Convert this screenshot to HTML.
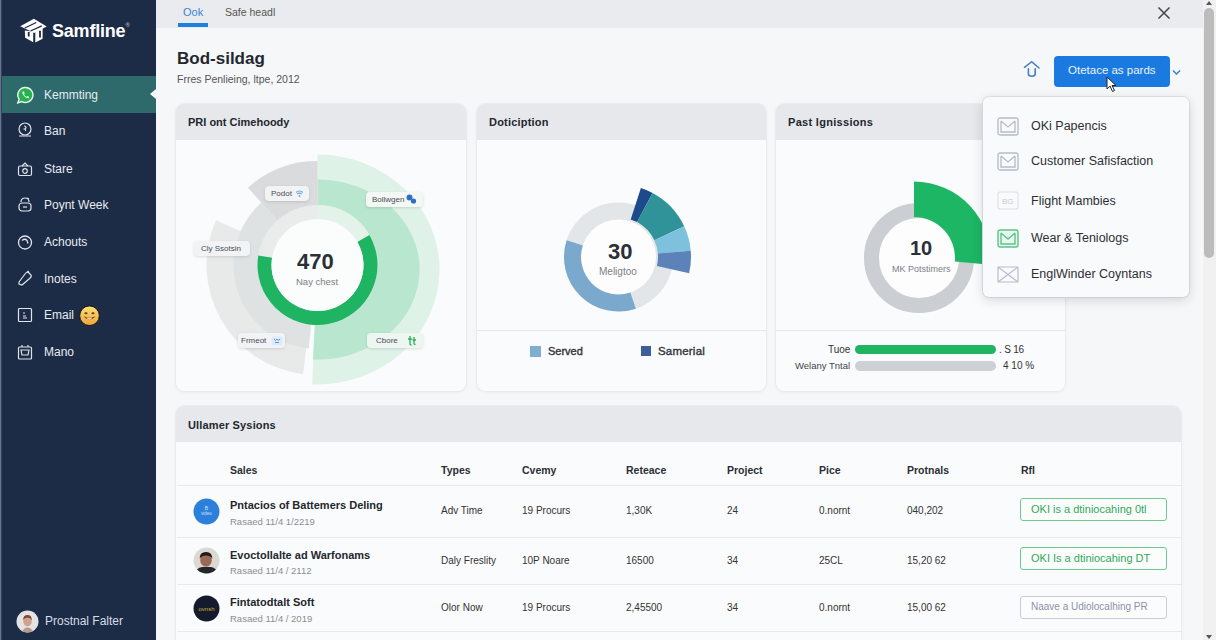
<!DOCTYPE html>
<html><head><meta charset="utf-8">
<style>
*{margin:0;padding:0;box-sizing:border-box}
html,body{width:1216px;height:640px;overflow:hidden}
body{font-family:"Liberation Sans",sans-serif;background:#f6f7f9;position:relative;color:#222}
.abs{position:absolute}
.sb{left:0;top:0;width:156px;height:640px;background:#1c2b46}
.sbedge{left:0;top:0;width:1px;height:640px;background:#66748a;box-shadow:1px 0 0 #34435b}
.nav{position:absolute;left:44px;font-size:12px;color:#e8ecf1;line-height:14px;white-space:nowrap}
.ic{position:absolute;left:17px;width:16px;height:16px}
.tabbar{left:156px;top:0;width:1060px;height:28px;background:#e9ebee}
.card{position:absolute;background:#fafbfc;border-radius:8px;box-shadow:0 0 0 0.5px #e3e5e8,0 1px 4px rgba(0,0,0,0.06);overflow:hidden}
.chd{position:absolute;left:0;top:0;right:0;height:36px;background:#e6e8eb}
.chd span{position:absolute;left:12px;top:11px;font-size:11px;font-weight:bold;color:#23272e;line-height:14px;white-space:nowrap}
.t{position:absolute;white-space:nowrap;line-height:1}
.chip{position:absolute;height:15px;background:#f2f3f5;border-radius:4px;box-shadow:0 1px 3px rgba(0,0,0,0.12);font-size:8px;color:#4a4d52;line-height:15px;padding-left:6px;white-space:nowrap}
.th{position:absolute;top:464px;font-size:10.5px;font-weight:bold;color:#2a2e35;line-height:12px;white-space:nowrap}
.td{position:absolute;font-size:10px;color:#333;line-height:12px;white-space:nowrap}
.hl{position:absolute;left:177px;width:1004px;height:1px;background:#e7e9ec}
.btn{position:absolute;left:1020px;width:147px;height:23px;border:1.5px solid #6ccb8c;border-radius:3px;font-size:11px;color:#32a858;line-height:20px;padding-left:10px;white-space:nowrap;background:#fbfdfc}
.dd{position:absolute;font-size:12.5px;color:#2c2f35;line-height:14px;white-space:nowrap;left:1031px}
.ddi{position:absolute;left:997px;width:22px;height:19px}
</style></head><body>

<!-- sidebar -->
<div class="abs sb"></div>
<div class="abs sbedge"></div>
<!-- logo -->
<svg class="abs" style="left:0;top:0" width="60" height="50" viewBox="0 0 60 50">
  <path d="M20.2,26.2 L33.9,18.8 L46.7,26.5 L34.2,33 Z" fill="#fff"/>
  <path d="M24.8,28 L36.3,22.5 M30.5,31 L41.8,25.8" stroke="#1b2a45" stroke-width="1.3"/>
  <path d="M24.8,30.5 L33.2,31.8 L33.2,42.3 L25.2,37.8 Z" fill="#fff"/>
  <path d="M35.3,31.5 L42.6,28 L42.6,38.8 L35.3,42.6 Z" fill="#fff"/>
  <path d="M28.7,32 V36.6 M40,30.8 V37.6" stroke="#1b2a45" stroke-width="1.8"/>
</svg>
<div class="t" style="left:52px;top:22px;font-size:18px;font-weight:bold;color:#fff;letter-spacing:-0.2px">Samfline<span style="font-size:6px;vertical-align:top;color:#aab">&#174;</span></div>

<!-- active item -->
<div class="abs" style="left:2px;top:76px;width:154px;height:37px;background:#2e6a6c"></div>
<div class="abs" style="left:150px;top:89px;width:0;height:0;border-top:5px solid transparent;border-bottom:5px solid transparent;border-right:6px solid #f6f7f9"></div>
<svg class="ic" style="top:86px;left:16px;width:19px;height:19px" viewBox="0 0 19 19">
  <path d="M9.5,1.5 a7.5,7.5 0 1 1 -3.6,14.1 L1.8,17 L3.1,13.2 A7.5,7.5 0 0 1 9.5,1.5 Z" fill="#25b24f" stroke="#eaf7ee" stroke-width="1.4"/>
  <path d="M6.5,5.5 c-0.8,2.5 2.5,6.5 6,6.8 l0.8,-1.4 -1.8,-0.9 -0.8,0.8 c-1.2,-0.5 -2.2,-1.6 -2.7,-2.8 l0.8,-0.8 -0.9,-1.8 Z" fill="#eaf7ee"/>
</svg>
<div class="nav" style="top:88px">Kemmting</div>

<svg class="ic" style="top:122px" viewBox="0 0 16 16" fill="none" stroke="#dfe4ea" stroke-width="1.2"><circle cx="8" cy="7" r="6"/><path d="M7,4 q2,0 2,1.5 q0,1 -1.5,1.5 q1.5,0.5 1,2 M2,14 h12"/></svg>
<div class="nav" style="top:124px">Ban</div>
<svg class="ic" style="top:161px" viewBox="0 0 16 16" fill="none" stroke="#dfe4ea" stroke-width="1.2"><rect x="1.5" y="5" width="13" height="9.5" rx="1.5"/><path d="M5,5 L8,2 L11,5"/><circle cx="8" cy="10" r="2.3"/></svg>
<div class="nav" style="top:162px">Stare</div>
<svg class="ic" style="top:196px" viewBox="0 0 16 16" fill="none" stroke="#dfe4ea" stroke-width="1.2"><path d="M4,6 q0,-4 4,-4 q4,0 4,4"/><rect x="2" y="7" width="12" height="8" rx="3"/><path d="M6,11 h4"/><path d="M10,2 l2,1"/></svg>
<div class="nav" style="top:198px">Poynt Week</div>
<svg class="ic" style="top:234px" viewBox="0 0 16 16" fill="none" stroke="#dfe4ea" stroke-width="1.3"><circle cx="8" cy="8.5" r="6.5"/><path d="M5,6.5 q3,-2.5 5,0 l1,3"/></svg>
<div class="nav" style="top:235px">Achouts</div>
<svg class="ic" style="top:270px" viewBox="0 0 16 16" fill="none" stroke="#dfe4ea" stroke-width="1.2"><path d="M2,12 L8,4 q2,-3 4,-1 l2,2 q1,2 -2,4 L5,15 L2,14 Z"/><path d="M10,2 l2,-1"/></svg>
<div class="nav" style="top:272px">Inotes</div>
<svg class="ic" style="top:307px" viewBox="0 0 16 16" fill="none" stroke="#dfe4ea" stroke-width="1.2"><rect x="1.5" y="1.5" width="13" height="13" rx="1"/><path d="M6,6 h2 M6,9 h3 M6,11 h4" stroke-width="1"/></svg>
<div class="nav" style="top:308px">Email</div>
<svg class="abs" style="left:79px;top:304.5px" width="21" height="21" viewBox="0 0 21 21"><defs><linearGradient id="emg" x1="0" y1="0" x2="0" y2="1"><stop offset="0" stop-color="#fbe27a"/><stop offset="1" stop-color="#eea43c"/></linearGradient></defs>
  <circle cx="10.5" cy="10.75" r="9.8" fill="url(#emg)" stroke="#140f0a" stroke-width="0.9"/>
  <ellipse cx="7" cy="8.3" rx="1.6" ry="1" fill="#6a3a10"/><ellipse cx="14" cy="8.3" rx="1.6" ry="1" fill="#6a3a10"/>
  <path d="M4.5,11.6 q6,6.5 12,0 q-6,1.5 -12,0 Z" fill="#8a4a12"/>
  <path d="M7.3,12.4 h6.2 q-1,2.4 -3.1,2.4 q-2.1,0 -3.1,-2.4 Z" fill="#ffd79a"/>
</svg>
<svg class="ic" style="top:344px" viewBox="0 0 16 16" fill="none" stroke="#dfe4ea" stroke-width="1.2"><rect x="1.5" y="3" width="13" height="12" rx="1"/><path d="M4,6 h8 l-1,5 h-6 Z M5,3 v-2 M11,3 v-2"/></svg>
<div class="nav" style="top:345px">Mano</div>

<!-- user -->
<svg class="abs" style="left:16px;top:610px" width="23" height="23" viewBox="0 0 23 23"><defs><clipPath id="cpu"><circle cx="11.5" cy="11.5" r="11"/></clipPath></defs><circle cx="11.5" cy="11.5" r="11" fill="#e4e2e3"/><g clip-path="url(#cpu)"><path d="M6,23 q0.5,-5 5.5,-5.5 q5,0.5 5.5,5.5 Z" fill="#b89a8c"/><ellipse cx="11.5" cy="11" rx="4.3" ry="5.2" fill="#d0a48c"/><path d="M7.2,10 q0,-5 4.3,-5 q4.3,0 4.3,5 q-1.5,-2.5 -4.3,-2.5 q-2.8,0 -4.3,2.5 Z" fill="#7a4a36"/></g></svg>
<div class="nav" style="left:45px;top:614px;font-size:12px;color:#d8dee6">Prostnal Falter</div>

<!-- tab bar -->
<div class="abs tabbar"></div>
<div class="t" style="left:183px;top:7px;font-size:11px;color:#3a86d6">Ook</div>
<div class="abs" style="left:178px;top:23px;width:30px;height:4px;background:#1e7fdc"></div>
<div class="t" style="left:225px;top:7px;font-size:10.5px;color:#555">Safe headl</div>
<svg class="abs" style="left:1157px;top:6px" width="14" height="14" viewBox="0 0 14 14"><path d="M1.5,1.5 L12.5,12.5 M12.5,1.5 L1.5,12.5" stroke="#444" stroke-width="1.5"/></svg>

<!-- scrollbar -->
<div class="abs" style="left:1203px;top:0;width:13px;height:640px;background:#f1f1f1"></div>
<div class="abs" style="left:1204px;top:8px;width:10px;height:250px;background:#bcbcbc;border-radius:5px"></div>
<div class="abs" style="left:1206px;top:1px;width:0;height:0;border-left:3.5px solid transparent;border-right:3.5px solid transparent;border-bottom:4px solid #555"></div>
<div class="abs" style="left:1206px;top:635px;width:0;height:0;border-left:3.5px solid transparent;border-right:3.5px solid transparent;border-top:4px solid #555"></div>

<!-- title -->
<div class="t" style="left:177px;top:50px;font-size:17px;font-weight:bold;color:#23272e">Bod-sildag</div>
<div class="t" style="left:177px;top:74px;font-size:10.5px;color:#555">Frres Penlieing, ltpe, 2012</div>

<!-- share icon & button -->
<svg class="abs" style="left:1022px;top:59px" width="20" height="20" viewBox="0 0 20 20" fill="none" stroke="#4a80bd" stroke-width="1.6" stroke-linecap="round"><path d="M2.5,8.3 L9.7,2.7 L17,9"/><path d="M6.4,9.8 V14.8 q0,2.4 3.4,2.4 q3.4,0 3.4,-2.4 V9.8"/></svg>
<div class="abs" style="left:1054px;top:56px;width:116px;height:31px;background:#1a7ae0;border-radius:4px"></div>
<div class="t" style="left:1068px;top:65px;font-size:11.5px;color:#eaf3fd">Otetace as pards</div>
<svg class="abs" style="left:1172px;top:69px" width="9" height="7" viewBox="0 0 9 7"><path d="M1,1.5 L4.5,5 L8,1.5" stroke="#2e7fd1" stroke-width="1.4" fill="none"/></svg>

<!-- cards -->
<div class="card" style="left:176px;top:103.5px;width:290px;height:287.5px"><div class="chd"><span>PRI ont Cimehoody</span></div></div>
<div class="card" style="left:477px;top:103.5px;width:289px;height:287.5px"><div class="chd"><span style="letter-spacing:0.2px">Doticiption</span></div>
  <div class="abs" style="left:0;top:226px;width:289px;height:1px;background:#e5e7ea"></div></div>
<div class="card" style="left:776px;top:103.5px;width:289px;height:287.5px"><div class="chd"><span style="letter-spacing:0.3px">Past lgnissions</span></div>
  <div class="abs" style="left:0;top:226px;width:289px;height:1px;background:#e5e7ea"></div></div>

<svg class="abs" style="left:0;top:0" width="1216" height="640" viewBox="0 0 1216 640">
<path d="M317.50,154.50 A122,115 0 1 1 312.18,384.39 L317.50,269.50 Z" fill="#dff2e8"/><path d="M317.50,179.50 A102,90 0 1 1 313.05,359.41 L317.50,269.50 Z" fill="#b8e6cf"/><path d="M303.09,374.18 A110,110 0 0 1 216.01,220.26 L316.50,265.00 Z" fill="#e8eaea"/><path d="M308.72,348.54 A84,84 0 0 1 261.29,202.58 L317.50,265.00 Z" fill="#dfe2e2"/><path d="M247.91,187.71 A104,104 0 0 1 317.50,161.00 L317.50,265.00 Z" fill="#dadbdd"/><circle cx="317.5" cy="265" r="60" fill="#e9eceb"/><path d="M317.50,205.00 A60,60 0 0 1 369.46,235.00 L317.50,265.00 Z" fill="#e3f3ea"/><path d="M369.46,235.00 A60,60 0 1 1 258.24,255.61 L272.07,257.80 A46,46 0 1 0 357.34,242.00 Z" fill="#1fb462"/><circle cx="317.5" cy="265" r="46" fill="#fbfcfc"/>
<circle cx="618.5" cy="257" r="38" fill="#fdfdfe"/><circle cx="618.5" cy="257" r="46" fill="none" stroke="#e3e6e8" stroke-width="17"/><path d="M635.79,308.68 A54.5,54.5 0 0 1 566.67,240.16 L582.84,245.41 A37.5,37.5 0 0 0 630.40,292.56 Z" fill="#7ba8cd"/><path d="M640.90,188.05 A72.5,72.5 0 0 1 652.54,192.99 L637.04,222.12 A39.5,39.5 0 0 0 630.71,219.43 Z" fill="#1c4a8b"/><path d="M652.54,192.99 A72.5,72.5 0 0 1 684.21,226.36 L654.30,240.31 A39.5,39.5 0 0 0 637.04,222.12 Z" fill="#2f9399"/><path d="M684.21,226.36 A72.5,72.5 0 0 1 690.72,250.68 L657.85,253.56 A39.5,39.5 0 0 0 654.30,240.31 Z" fill="#7ec1dc"/><path d="M690.72,250.68 A72.5,72.5 0 0 1 689.14,273.31 L656.99,265.89 A39.5,39.5 0 0 0 657.85,253.56 Z" fill="#5d82b9"/>
<circle cx="919" cy="258" r="40.5" fill="#fdfdfe"/><circle cx="919" cy="258" r="47.5" fill="none" stroke="#cbced2" stroke-width="15"/><path d="M914.00,181.50 A76.5,76.5 0 0 1 990.21,264.67 L954.84,261.57 A41,41 0 0 0 914.00,217.00 Z" fill="#1db664"/>
</svg>

<!-- chart1 texts -->
<div class="t" style="left:297px;top:250.5px;font-size:22px;font-weight:bold;color:#2a2f38">470</div>
<div class="t" style="left:296px;top:277px;font-size:9.5px;color:#7a7f86">Nay chest</div>
<div class="chip" style="left:265px;top:186px;width:44px">Podot<svg style="position:absolute;left:30px;top:3px" width="9" height="9" viewBox="0 0 9 9" fill="none" stroke="#6aa6e6" stroke-width="1.1"><path d="M1,3.5 q3.5,-3 7,0 M2.3,5 q2.2,-1.8 4.4,0"/><circle cx="4.5" cy="7" r="0.9" fill="#6aa6e6" stroke="none"/></svg></div>
<div class="chip" style="left:366px;top:192px;width:57px;background:#f3f8f5">Bollwgen<svg style="position:absolute;left:40px;top:2px" width="11" height="11" viewBox="0 0 11 11"><circle cx="3.5" cy="3.5" r="3" fill="#2e6fc4"/><circle cx="7.5" cy="7" r="2.6" fill="#2e6fc4"/></svg></div>
<div class="chip" style="left:194px;top:241px;width:56px;padding-left:7px">Cly Ssotsin</div>
<div class="chip" style="left:238px;top:333px;width:47px;padding-left:3px">Frmeot<svg style="position:absolute;left:33px;top:2.5px" width="12" height="10" viewBox="0 0 12 10"><rect x="0.5" y="0.5" width="11" height="9" rx="2.5" fill="#dcebfb"/><path d="M3,3 q1.5,3 3,0 q1.5,3 3,0 M4,6.5 h4" stroke="#5b8fd6" stroke-width="1" fill="none"/></svg></div>
<div class="chip" style="left:367px;top:333px;width:56px;padding-left:9px;background:#eef6f1">Cbore<svg style="position:absolute;left:40px;top:2px" width="10" height="11" viewBox="0 0 10 11" fill="none" stroke="#2fae5c" stroke-width="1.3"><path d="M3,1 V9 q0,1 1.5,1 M1,4 h4 M7,2 V8.5 q0,1 1.5,1 M5.5,5 h3.5"/></svg></div>

<!-- chart2 texts -->
<div class="t" style="left:608px;top:241px;font-size:22px;font-weight:bold;color:#2a2f38">30</div>
<div class="t" style="left:599px;top:267px;font-size:10px;color:#7a7f86">Meligtoo</div>
<div class="abs" style="left:530px;top:346px;width:11px;height:11px;background:#7eaed0"></div>
<div class="t" style="left:548px;top:346px;font-size:11px;color:#33373d;-webkit-text-stroke:0.4px #33373d">Served</div>
<div class="abs" style="left:641px;top:346px;width:10px;height:10px;background:#3d5f99"></div>
<div class="t" style="left:658px;top:346px;font-size:11.5px;color:#33373d;-webkit-text-stroke:0.4px #33373d;letter-spacing:0.2px">Samerial</div>

<!-- chart3 texts -->
<div class="t" style="left:910px;top:238px;font-size:20px;font-weight:bold;color:#2a2f38">10</div>
<div class="t" style="left:892px;top:265px;font-size:9px;color:#7a7f86">MK Potstimers</div>
<div class="t" style="left:828px;top:345px;font-size:10px;color:#333">Tuoe</div>
<div class="abs" style="left:855px;top:345px;width:141px;height:9px;background:#20b462;border-radius:5px"></div>
<div class="t" style="left:999px;top:345px;font-size:10px;color:#333;letter-spacing:-0.2px">. S 16</div>
<div class="t" style="left:795px;top:361px;font-size:9.5px;color:#444">Welany Tntal</div>
<div class="abs" style="left:855px;top:361px;width:141px;height:10px;background:#cdd0d4;border-radius:5px"></div>
<div class="t" style="left:1003px;top:361px;font-size:10px;color:#333">4 10 %</div>

<!-- dropdown -->
<div class="abs" style="left:983px;top:97px;width:206px;height:200px;background:#f9fafb;border-radius:6px;box-shadow:0 3px 12px rgba(0,0,0,0.15),0 0 0 1px #e4e6e9"></div>
<svg class="ddi" style="top:117px" viewBox="0 0 22 19" fill="none" stroke="#b4bbcc" stroke-width="1.3"><rect x="1" y="1" width="20" height="17" rx="2"/><path d="M4,4 L11,10 L18,4 M4,4 V15 H18 V4"/></svg>
<div class="dd" style="top:119px">OKi Papencis</div>
<svg class="ddi" style="top:152px" viewBox="0 0 22 19" fill="none" stroke="#b4bbcc" stroke-width="1.3"><rect x="1" y="1" width="20" height="17" rx="2"/><path d="M4,4 L11,10 L18,4 M4,4 V15 H18 V4"/></svg>
<div class="dd" style="top:154px">Customer Safisfaction</div>
<svg class="ddi" style="top:191px" viewBox="0 0 22 19" fill="none" stroke="#dcdfe3" stroke-width="1.1"><rect x="1" y="1" width="20" height="17" rx="2"/><text x="5" y="13" font-size="8" fill="#c8ccd1" stroke="none" font-family="Liberation Sans">BG</text></svg>
<div class="dd" style="top:194px">Flight Mambies</div>
<svg class="ddi" style="top:229px" viewBox="0 0 22 19" fill="none" stroke="#5cc48a" stroke-width="1.4"><rect x="1" y="1" width="20" height="17" rx="2" fill="#e9f6ef"/><path d="M4,4 L11,10 L18,4 M4,4 V15 H18 V4"/></svg>
<div class="dd" style="top:231px">Wear &amp; Teniologs</div>
<svg class="ddi" style="top:265px" viewBox="0 0 22 19" fill="none" stroke="#b8bcd0" stroke-width="1.2"><rect x="1" y="2" width="20" height="15" rx="1"/><path d="M1,2 L21,17 M21,2 L1,17"/></svg>
<div class="dd" style="top:267px">EnglWinder Coyntans</div>

<!-- cursor -->
<svg class="abs" style="left:1106px;top:76px" width="14" height="18" viewBox="0 0 14 18"><path d="M1,1 L1,13 L4,10 L6.5,15.5 L8.5,14.5 L6,9.5 L10,9.5 Z" fill="#fff" stroke="#222" stroke-width="1"/></svg>

<!-- table -->
<div class="card" style="left:176px;top:406px;width:1005px;height:260px"><div class="chd"><span style="left:12px;top:12px;letter-spacing:0.15px">Ullamer Sysions</span></div></div>
<div class="th" style="left:230px">Sales</div>
<div class="th" style="left:441px">Types</div>
<div class="th" style="left:522px">Cvemy</div>
<div class="th" style="left:626px">Reteace</div>
<div class="th" style="left:727px">Project</div>
<div class="th" style="left:819px">Pice</div>
<div class="th" style="left:907px">Protnals</div>
<div class="th" style="left:1021px">Rfl</div>
<div class="hl" style="top:485px"></div>
<div class="hl" style="top:537px"></div>
<div class="hl" style="top:584px"></div>
<div class="hl" style="top:631px"></div>

<!-- row1 -->
<svg class="abs" style="left:193px;top:498px" width="27" height="27" viewBox="0 0 27 27"><circle cx="13.5" cy="13.5" r="13" fill="#2d7fdc"/><text x="13.5" y="12" font-size="5" fill="#cfe3fa" text-anchor="middle" font-family="Liberation Sans">B</text><text x="13.5" y="17" font-size="4.5" fill="#cfe3fa" text-anchor="middle" font-family="Liberation Sans">video</text></svg>
<div class="td" style="left:230px;top:499px;font-size:11px;font-weight:bold;color:#23272e">Pntacios of Battemers Deling</div>
<div class="td" style="left:230px;top:516px;font-size:9.5px;color:#8a8e94">Rasaed 11/4 1/2219</div>
<div class="td" style="left:441px;top:505px">Adv Time</div>
<div class="td" style="left:522px;top:505px">19 Procurs</div>
<div class="td" style="left:626px;top:505px">1,30K</div>
<div class="td" style="left:727px;top:505px">24</div>
<div class="td" style="left:819px;top:505px">0.nornt</div>
<div class="td" style="left:907px;top:505px">040,202</div>
<div class="btn" style="top:498px">OKI is a dtiniocahing 0tl</div>

<!-- row2 -->
<svg class="abs" style="left:193px;top:547px" width="27" height="27" viewBox="0 0 27 27"><defs><clipPath id="cp2"><circle cx="13.5" cy="13.5" r="13"/></clipPath></defs><circle cx="13.5" cy="13.5" r="13" fill="#dcd8d4"/><g clip-path="url(#cp2)"><path d="M1,28 q2,-7 8,-8 l9,0 q6,1 8,8 Z" fill="#262626"/><ellipse cx="13" cy="13" rx="5.8" ry="6.8" fill="#9a6a55"/><path d="M6.8,12 q-0.5,-7 6.2,-7 q6.5,0 6.2,7 q-1,-3.5 -6.2,-3.5 q-5.2,0 -6.2,3.5 Z" fill="#1e1a18"/></g></svg>
<div class="td" style="left:230px;top:549px;font-size:11px;font-weight:bold;color:#23272e">Evoctollalte ad Warfonams</div>
<div class="td" style="left:230px;top:565px;font-size:9.5px;color:#8a8e94">Rasaed 11/4 / 2112</div>
<div class="td" style="left:441px;top:554.5px">Daly Freslity</div>
<div class="td" style="left:522px;top:554.5px">10P Noare</div>
<div class="td" style="left:626px;top:554.5px">16500</div>
<div class="td" style="left:727px;top:554.5px">34</div>
<div class="td" style="left:819px;top:554.5px">25CL</div>
<div class="td" style="left:907px;top:554.5px">15,20 62</div>
<div class="btn" style="top:547px">OKI Is a dtiniocahing DT</div>

<!-- row3 -->
<svg class="abs" style="left:193px;top:595px" width="27" height="27" viewBox="0 0 27 27"><circle cx="13.5" cy="13.5" r="13" fill="#151a2c"/><text x="13.5" y="15.5" font-size="6" fill="#c8b43a" text-anchor="middle" font-family="Liberation Sans">ovnsh</text></svg>
<div class="td" style="left:230px;top:596px;font-size:11px;font-weight:bold;color:#23272e">Fintatodtalt Soft</div>
<div class="td" style="left:230px;top:613px;font-size:9.5px;color:#8a8e94">Rasaed 11/4 / 2019</div>
<div class="td" style="left:441px;top:602px">Olor Now</div>
<div class="td" style="left:522px;top:602px">19 Procurs</div>
<div class="td" style="left:626px;top:602px">2,45500</div>
<div class="td" style="left:727px;top:602px">34</div>
<div class="td" style="left:819px;top:602px">0.nornt</div>
<div class="td" style="left:907px;top:602px">15,00 62</div>
<div class="btn" style="top:596px;border-color:#c9cbdc;color:#8d90ad;font-size:10px">Naave a Udiolocalhing PR</div>

</body></html>
